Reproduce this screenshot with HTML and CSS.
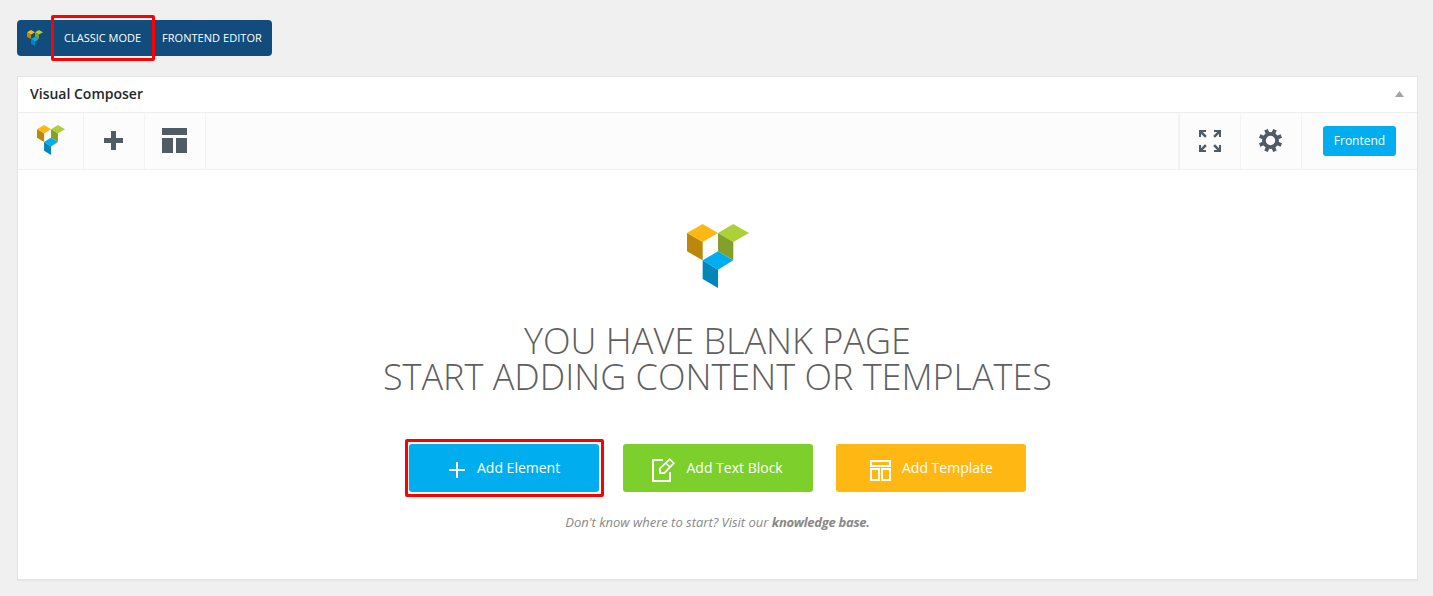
FILE: index.html
```
<!DOCTYPE html>
<html lang="en">
<head>
<meta charset="utf-8">
<title>Visual Composer</title>
<link rel="stylesheet" href="styles.css">
</head>
<body>
<svg class="defs" aria-hidden="true">
  <symbol id="logo" viewBox="0 0 186 192" preserveAspectRatio="none">
    <path fill="#ffb713" d="M0 27 47 0l46 27-46 27z"/>
    <path fill="#bb880b" d="M0 27 47 54v55L0 82z"/>
    <path fill="#add036" d="M93 27 139 0l47 27-47 27z"/>
    <path fill="#82a02a" d="M93 27l46 27v55L93 82z"/>
    <path fill="#00aef0" d="M47 109 93 82l46 27-46 28z"/>
    <path fill="#0086b8" d="M47 109l46 28v55l-46-27z"/>
  </symbol>
</svg>
<nav class="switch">
  <span class="switch-logo"><svg class="logo-mini"><use href="#logo"/></svg></span>
  <a class="switch-item classic"><span>CLASSIC MODE</span></a>
  <a class="switch-item frontend"><span>FRONTEND EDITOR</span></a>
</nav>
<main class="panel">
  <header class="panel-head">
    <h2><span>Visual Composer</span></h2>
    <svg class="toggle" viewBox="0 0 9 6"><path fill="#a0a5aa" d="M0 6 4.5 0 9 6z"/></svg>
  </header>
  <div class="toolbar">
    <span class="cell cell-logo"><svg class="logo-small"><use href="#logo"/></svg></span>
    <span class="cell"><svg width="19" height="19" viewBox="0 0 19 19"><path fill="#4f5b65" d="M7 0h5v7h7v5h-7v7H7v-7H0V7h7z"/></svg></span>
    <span class="cell"><svg width="25" height="25" viewBox="0 0 25 25"><path fill="#4f5b65" d="M0 0h25v7H0zM0 10h11v15H0zM14 10h11v15H14z"/></svg></span>
    <span class="spacer"></span>
    <span class="cell cell-right cell-first"><svg width="22" height="22" viewBox="0 0 22 22"><g fill="#4f5b65"><path id="arrow" d="M0 0h7v2H3.8L7.8 6 6 7.8 2 3.8V7H0z"/><use href="#arrow" transform="matrix(-1 0 0 1 22 0)"/><use href="#arrow" transform="matrix(1 0 0 -1 0 22)"/><use href="#arrow" transform="rotate(180 11 11)"/></g></svg></span>
    <span class="cell cell-right"><svg width="24" height="24" viewBox="-12.5 -12.5 24 24"><g fill="#4f5b65"><g transform="rotate(22.5)"><path id="tooth" d="M-1.9-11.7h3.8v4.5h-3.8zM-1.9 11.7h3.8v-4.5h-3.8z"/><use href="#tooth" transform="rotate(45)"/><use href="#tooth" transform="rotate(90)"/><use href="#tooth" transform="rotate(135)"/></g></g><circle r="6.6" fill="none" stroke="#4f5b65" stroke-width="3.8"/></svg></span>
    <span class="cell-button"><a class="btn-front"><span>Frontend</span></a></span>
  </div>
  <section class="welcome">
    <svg class="logo-big"><use href="#logo"/></svg>
    <h1><span>YOU HAVE BLANK PAGE</span><span>START ADDING CONTENT OR TEMPLATES</span></h1>
    <div class="actions">
      <a class="action blue"><svg width="16" height="16" viewBox="0 0 16 16"><path fill="#fff" d="M7 0h2v7h7v2H9v7H7V9H0V7h7z"/></svg><span>Add Element</span></a>
      <a class="action green"><svg width="23" height="24" viewBox="0 0 23 24"><g fill="none" stroke="#fff" stroke-width="2"><path d="M11 2H1v21h17v-9"/><path stroke-width="1.7" d="M8 15.2V10.4L17.8 1.2l4 4L12.3 15.2zM13.8 5l4.2 4.2"/></g></svg><span>Add Text Block</span></a>
      <a class="action yellow"><svg width="21" height="21" viewBox="0 0 21 21"><path fill="none" stroke="#fff" stroke-width="2" d="M1 1h19v5H1zM1 9h8v11H1zM12 9h8v11h-8z"/></svg><span>Add Template</span></a>
    </div>
    <p class="hint"><span>Don't know where to start? Visit our <b>knowledge base.</b></span></p>
  </section>
</main>
</body>
</html>
```
FILE: styles.css
```
*, *::after { box-sizing: border-box; }
body { margin: 0; padding: 20px 15px 16px 17px; height: 596px; background: #f0f0f0; font-family: "Open Sans", "Noto Sans", sans-serif; }
svg { display: block; flex: none; }
.defs { position: absolute; width: 0; height: 0; }
span { white-space: nowrap; }

.switch { display: flex; width: 255px; height: 36px; background: #114c7d; border-radius: 4px; color: #fff; font-size: 11px; line-height: 36px; }
.switch-logo { width: 37px; padding: 10px 0 0 10px; }
.logo-mini { width: 16px; height: 16px; }
.switch-item { position: relative; }
.classic { width: 98px; padding-left: 10px; }
.frontend { padding-left: 10px; letter-spacing: .05px; }
.classic::after { content: ""; position: absolute; left: -3px; top: -5px; width: 104px; height: 46px; border: 3px solid #f00; border-radius: 2px; }

.panel { margin-top: 20px; width: 1401px; height: 504px; background: #fff; border: 1px solid #e5e5e5; box-shadow: 0 1px 1px rgba(0,0,0,.04); }
.panel-head { display: flex; justify-content: space-between; align-items: center; height: 36px; padding: 0 13px 2px 12px; border-bottom: 1px solid #eee; }
h2 { margin: 0; font-size: 14px; line-height: 20px; font-weight: 600; color: #23282d; }
.toggle { width: 9px; height: 6px; }
.toolbar { display: flex; height: 57px; background: #fcfcfc; border-bottom: 1px solid #f1f1f1; }
.cell { display: flex; align-items: center; justify-content: center; width: 61px; padding: 0 2px 2px 0; border-right: 1px solid #f3f3f3; }
.cell-logo { width: 66px; padding-right: 0; }
.logo-small { width: 28px; height: 30px; }
.spacer { flex: 1; }
.cell-first { width: 63px; padding: 0; border-left: 2px solid #f3f3f3; }
.cell-button { width: 115px; padding: 13px 0 0 21px; }
.btn-front { display: block; width: 73px; height: 30px; border-radius: 3px; background: #00aef0; color: #fff; font-size: 12px; line-height: 30px; text-align: center; }

.welcome { display: flex; flex-direction: column; align-items: center; padding-top: 54px; }
.logo-big { width: 62px; height: 64px; }
h1 { display: flex; flex-direction: column; align-items: center; margin: 35px 0 0; font-size: 36px; line-height: 36px; font-weight: 300; color: #5f5f5f; }
.actions { display: flex; gap: 23.5px; margin-top: 49px; }
.action { position: relative; display: flex; align-items: center; width: 190px; height: 48px; border-radius: 3px; color: #fff; font-size: 14px; line-height: 48px; }
.action svg { margin-top: 4px; }
.blue { background: #00aef0; padding-left: 40px; gap: 12px; }
.blue::after { content: ""; position: absolute; left: -4px; top: -5px; width: 199px; height: 58px; border: 3px solid #f00; border-radius: 2px; }
.green { background: #7dcf2c; padding-left: 29px; gap: 12px; }
.yellow { background: #ffb713; padding-left: 34px; gap: 11px; }
.hint { margin: 20px 0 0; font-size: 13px; line-height: 20px; font-style: italic; letter-spacing: -.01px; color: #888; }
.hint b { font-weight: 700; letter-spacing: -.28px; }
```
